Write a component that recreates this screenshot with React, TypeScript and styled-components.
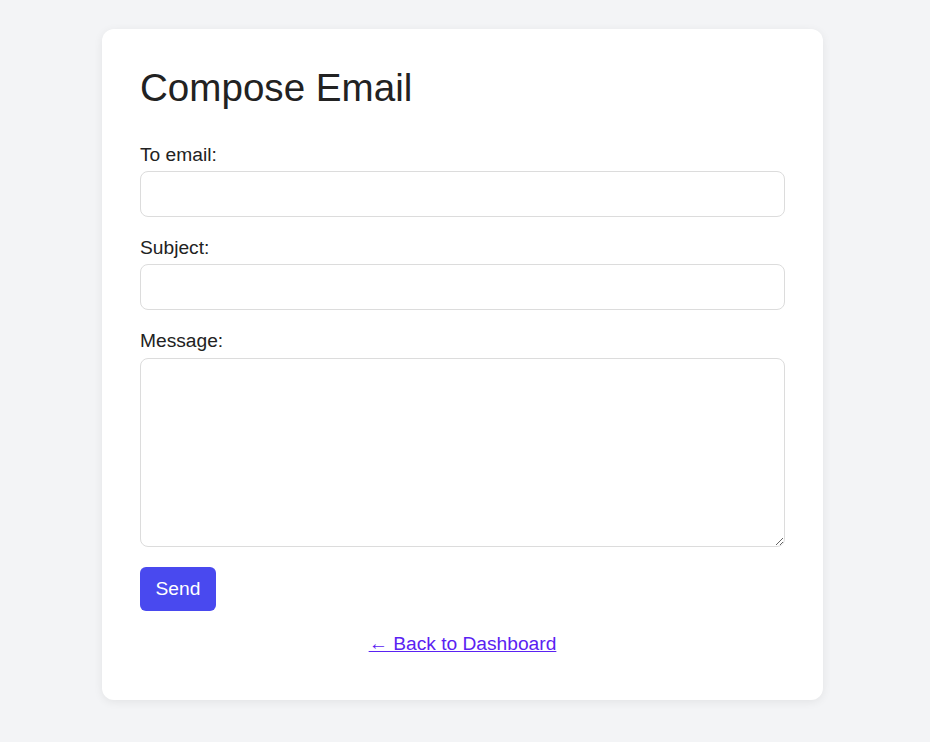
import React from "react";
import styled, { createGlobalStyle } from "styled-components";

const GlobalStyle = createGlobalStyle`
  html, body {
    margin: 0;
    padding: 0;
    background: #f3f4f6;
    font-family: "Liberation Sans", Arial, Helvetica, sans-serif;
    color: #222;
  }
  * { box-sizing: border-box; }
`;

const Page = styled.div`
  min-height: 742px;
  padding: 29px 0 40px 102px;
`;

const Card = styled.div`
  width: 721px;
  background: #ffffff;
  border-radius: 12px;
  box-shadow: 0 2px 10px rgba(0, 0, 0, 0.07);
  padding: 37px 38px 44.5px;
`;

const Title = styled.h1`
  margin: 0 0 33.5px;
  font-size: 38.6px;
  line-height: 44px;
  font-weight: 400;
  color: #222;
`;

const Form = styled.form`
  display: flex;
  flex-direction: column;
`;

const Label = styled.label`
  display: block;
  font-size: 19.2px;
  line-height: 22px;
  margin-bottom: 5.5px;
  color: #222;
`;

const Input = styled.input`
  display: block;
  width: 100%;
  height: 45.5px;
  margin: 0 0 20px;
  padding: 0 12px;
  border: 1px solid #dcdcdc;
  border-radius: 8px;
  font-family: inherit;
  font-size: 18px;
  background: #fff;
  outline: none;
`;

const TextArea = styled.textarea`
  display: block;
  width: 100%;
  height: 189.5px;
  margin: 0.5px 0 20px;
  padding: 10px 12px;
  border: 1px solid #dcdcdc;
  border-radius: 8px;
  font-family: inherit;
  font-size: 18px;
  background: #fff;
  outline: none;
  resize: both;
`;

const Button = styled.button`
  align-self: flex-start;
  height: 44px;
  padding: 0 15.5px;
  border: none;
  border-radius: 6px;
  background: #4949ef;
  color: #ffffff;
  font-family: inherit;
  font-size: 19.2px;
  cursor: pointer;
`;

const Footer = styled.div`
  margin-top: 22px;
  text-align: center;
  line-height: 21px;
`;

const BackLink = styled.a`
  color: #5a22f2;
  font-size: 19.2px;
  text-decoration: underline;
`;

export default function App() {
  return (
    <>
      <GlobalStyle />
      <Page>
        <Card>
          <Title>Compose Email</Title>
          <Form onSubmit={(e) => e.preventDefault()}>
            <Label htmlFor="to">To email:</Label>
            <Input id="to" type="email" />
            <Label htmlFor="subject">Subject:</Label>
            <Input id="subject" type="text" />
            <Label htmlFor="message">Message:</Label>
            <TextArea id="message" />
            <Button type="submit">Send</Button>
          </Form>
          <Footer>
            <BackLink href="#">← Back to Dashboard</BackLink>
          </Footer>
        </Card>
      </Page>
    </>
  );
}
